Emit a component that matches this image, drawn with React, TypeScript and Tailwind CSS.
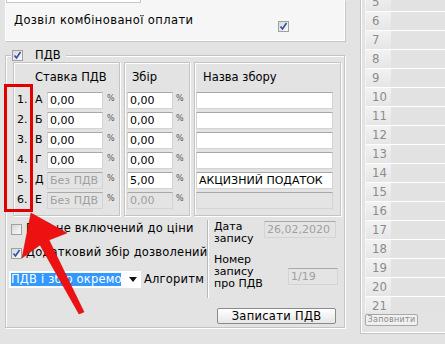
import React from "react"

const rows = [
  { n: "1.", l: "А", a: "0,00", aOff: false, b: "0,00", bOff: false, c: "", cOff: false },
  { n: "2.", l: "Б", a: "0,00", aOff: false, b: "0,00", bOff: false, c: "", cOff: false },
  { n: "3.", l: "В", a: "0,00", aOff: false, b: "0,00", bOff: false, c: "", cOff: false },
  { n: "4.", l: "Г", a: "0,00", aOff: false, b: "0,00", bOff: false, c: "", cOff: false },
  { n: "5.", l: "Д", a: "Без ПДВ", aOff: true, b: "5,00", bOff: false, c: "АКЦИЗНИЙ ПОДАТОК", cOff: false },
  { n: "6.", l: "Е", a: "Без ПДВ", aOff: true, b: "0,00", bOff: true, c: "", cOff: true },
]

const gridRows = [5, 6, 7, 8, 9, 10, 11, 12, 13, 14, 15, 16, 17, 18, 19, 20, 21]

function Check({ on }: { on: boolean }) {
  return (
    <span className="w-[11px] h-[11px] shrink-0 border border-[#a0a0a0] bg-gradient-to-br from-[#d8d8d8] to-[#fafafa] flex items-center justify-center">
      {on && (
        <svg width="9" height="9" viewBox="0 0 9 9">
          <path d="M1.5 4.5 L3.5 7 L7.5 1" fill="none" stroke="#3050a8" strokeWidth="1.6" />
        </svg>
      )}
    </span>
  )
}

function Field(props: { w: string; value: string; off?: boolean }) {
  return (
    <div
      className={
        props.w +
        " h-[17px] shrink-0 border border-[#d4d4d4] border-t-[#a8a8a8] px-[2px] text-[11px] leading-[15px] whitespace-nowrap overflow-hidden " +
        (props.off ? "bg-[#e4e4e4] text-[#a0a0a0]" : "bg-white text-black")
      }
    >
      {props.value}
    </div>
  )
}

function Pct() {
  return <span className="text-[8px] text-[#555] leading-[10px] self-start mt-[2px]">%</span>
}

export default function App() {
  return (
    <div className="w-[445px] h-[344px] bg-[#e3e3e3] relative overflow-hidden flex font-['DejaVu_Sans',sans-serif] text-[11px] text-black">
      {/* left side */}
      <div className="w-[350px] flex flex-col">
        {/* top panel, scrolled */}
        <div className="ml-[5px] mr-[5px] h-[41px] bg-[#f6f6f6] border-l border-r border-b border-[#fdfdfd] shadow-[1px_1px_0_#c8c8c8] overflow-hidden flex flex-col">
          <div className="w-[135px] h-[14px] -mt-[11px] bg-white border border-[#c8c8c8]" />
          <div className="flex items-start">
            <span className="ml-[8px] mt-[9px] w-[264px] tracking-[0.4px] text-[11.5px] whitespace-nowrap">Дозвіл комбінованої оплати</span>
            <span className="mt-[18px]">
              <Check on={true} />
            </span>
          </div>
        </div>

        {/* ПДВ group */}
        <div className="mt-[14px] mx-[5px] h-[273px] border border-[#c4c4c4] shadow-[inset_1px_1px_0_#fff,1px_1px_0_#fff] flex flex-col">
          <div className="-mt-[7px] ml-[5px] flex items-center gap-[12px] bg-[#e3e3e3] w-[55px] px-[1px]">
            <Check on={true} />
            <span className="text-[11.5px] leading-[12px]">ПДВ</span>
          </div>

          <div className="mt-[1px] ml-[7px] flex gap-[4px]">
            {/* Ставка ПДВ */}
            <div className="w-[107px] h-[154px] border border-[#c4c4c4] shadow-[inset_1px_1px_0_#fff,1px_1px_0_#fff] flex flex-col pl-[3px]">
              <div className="mt-[7px] ml-[18px] h-[14px] leading-[14px] text-[11.5px] whitespace-nowrap">Ставка ПДВ</div>
              <div className="mt-[7px] flex flex-col">
                {rows.map((r) => (
                  <div key={r.n} className="h-[20px] flex items-start pt-[1px]">
                    <span className="w-[18px] text-[11px] leading-[16px]">{r.n}</span>
                    <span className="w-[12px] text-[11px] leading-[16px]">{r.l}</span>
                    <Field w="w-[56px]" value={r.a} off={r.aOff} />
                    <span className="ml-[4px] flex">
                      <Pct />
                    </span>
                  </div>
                ))}
              </div>
            </div>

            {/* Збір */}
            <div className="w-[66px] h-[154px] border border-[#c4c4c4] shadow-[inset_1px_1px_0_#fff,1px_1px_0_#fff] flex flex-col pl-[2px]">
              <div className="mt-[7px] ml-[5px] h-[14px] leading-[14px] text-[11.5px]">Збір</div>
              <div className="mt-[7px] flex flex-col">
                {rows.map((r) => (
                  <div key={r.n} className="h-[20px] flex items-start pt-[1px]">
                    <Field w="w-[46px]" value={r.b} off={r.bOff} />
                    <span className="ml-[3px] flex">
                      <Pct />
                    </span>
                  </div>
                ))}
              </div>
            </div>

            {/* Назва збору */}
            <div className="w-[147px] h-[154px] border border-[#c4c4c4] shadow-[inset_1px_1px_0_#fff,1px_1px_0_#fff] flex flex-col pl-[1px]">
              <div className="mt-[7px] ml-[7px] h-[14px] leading-[14px] text-[11.5px]">Назва збору</div>
              <div className="mt-[7px] flex flex-col">
                {rows.map((r) => (
                  <div key={r.n} className="h-[20px] flex items-start pt-[1px]">
                    <Field w="w-[137px]" value={r.c} off={r.cOff} />
                  </div>
                ))}
              </div>
            </div>
          </div>

          {/* bottom area */}
          <div className="mt-[3px] flex">
            <div className="w-[201px] flex flex-col pl-[5px] pt-[4px]">
              <div className="flex items-center gap-[4px] h-[12px]">
                <Check on={false} />
                <span className="whitespace-nowrap text-[11.5px] tracking-[0.2px]">ПДВ не включений до ціни</span>
              </div>
              <div className="mt-[12px] flex items-center gap-[4px] h-[12px]">
                <Check on={true} />
                <span className="whitespace-nowrap text-[11.5px] tracking-[0.2px]">Додатковий збір дозволений</span>
              </div>
              <div className="mt-[12px] flex items-center -ml-[2px]">
                <div className="w-[132px] h-[17px] bg-white flex items-center pl-[2px]">
                  <span className="bg-[#3399ff] text-white h-[13px] leading-[13px] w-[110px] whitespace-nowrap overflow-hidden text-[11.5px] tracking-[0.2px]">ПДВ і збір окремо</span>
                  <svg className="ml-[8px]" width="8" height="5" viewBox="0 0 8 5">
                    <path d="M0 0 H8 L4 5 Z" fill="#111" />
                  </svg>
                </div>
                <span className="ml-[3px] whitespace-nowrap text-[11.5px] tracking-[0.2px]">Алгоритм</span>
              </div>
            </div>

            <div className="w-[1px] h-[78px] mt-[1px] bg-[#b8b8b8] shadow-[1px_0_0_#fff]" />

            <div className="ml-[6px] flex flex-col">
              <div className="flex items-start">
                <div className="w-[50px] flex flex-col text-[11px] leading-[12px] mt-[2px]">
                  <span>Дата</span>
                  <span>запису</span>
                </div>
                <div className="mt-[2px]">
                  <Field w="w-[72px]" value="26,02,2020" off={true} />
                </div>
              </div>
              <div className="flex items-start mt-[9px]">
                <div className="w-[74px] flex flex-col text-[11px] leading-[12px] whitespace-nowrap">
                  <span>Номер</span>
                  <span>запису</span>
                  <span>про ПДВ</span>
                </div>
                <div className="mt-[14px]">
                  <Field w="w-[50px]" value="1/19" off={true} />
                </div>
              </div>
              <button className="mt-[18px] ml-[3px] w-[119px] h-[16px] border border-[#8a8a8a] rounded-[2px] bg-gradient-to-b from-white to-[#e6e6e6] text-[11.5px] leading-[14px] tracking-[0.3px]">
                Записати ПДВ
              </button>
            </div>
          </div>
        </div>
      </div>

      {/* right grid */}
      <div className="ml-[10px] w-[85px] h-[334px] border-l border-b border-[#c4c4c4] shadow-[inset_1px_-1px_0_#fff] flex flex-col pl-[4px]">
        <div className="h-[313px] overflow-hidden border-l border-[#f4f4f4] flex flex-col">
          <div className="-mt-[7px] flex flex-col">
            {gridRows.map((n) => (
              <div key={n} className="h-[19px] shrink-0 flex border-b border-white">
                <div className="w-[25px] bg-gradient-to-b from-[#f2f2f2] to-[#e6e6e6] text-[#8c8c8c] pl-[6px] text-[13px] leading-[18px] font-['Liberation_Sans_Narrow','DejaVu_Sans_Condensed',sans-serif] font-light">
                  {n}
                </div>
                <div className="flex-1 bg-[#e2e2e2]" />
              </div>
            ))}
          </div>
        </div>
        <div className="mt-[1px] w-[53px] h-[12px] border border-[#a8a8a8] rounded-[2px] bg-[#f0f0f0] text-[#8a8a8a] text-[8px] leading-[10px] text-center tracking-[0.3px]">
          Заповнити
        </div>
      </div>

      {/* annotation: red box and arrow */}
      <div className="absolute left-[4px] top-[84px] w-[29px] h-[128px] border-[3px] border-[#e00000]" />
      <svg className="absolute left-0 top-0" width="445" height="344" viewBox="0 0 445 344">
        <path d="M31 213 L67 233 L49 240 L84 312 L79 314 L40 245 L22 258 Z" fill="#ee1111" stroke="#c00" strokeWidth="0.5" />
      </svg>
    </div>
  )
}
